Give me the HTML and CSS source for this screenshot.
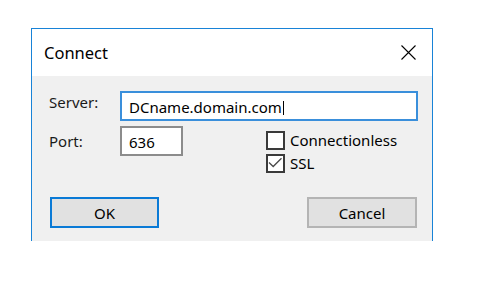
FILE: index.html
```html
<!DOCTYPE html>
<html lang="en">
<head>
    <meta charset="UTF-8">
    <title>Connect</title>
    <link rel="stylesheet" href="styles.css">
</head>
<body>
    <div class="dialog">
        <div class="titlebar">
            <span class="title">Connect</span>
            <svg class="close" width="15" height="15" viewBox="0 0 15 15">
                <path d="M0.5 0.5 L14.5 14.5 M14.5 0.5 L0.5 14.5" stroke="#000" stroke-width="1.1" fill="none"/>
            </svg>
        </div>
        <div class="content">
            <div class="row">
                <label class="label server-label">Server:</label>
                <div class="textbox server focused">DCname.domain.com<span class="caret"></span></div>
            </div>
            <div class="row port-row">
                <label class="label port-label">Port:</label>
                <div class="textbox port">636</div>
                <div class="checks">
                    <div class="check">
                        <span class="box"></span>
                        <span>Connectionless</span>
                    </div>
                    <div class="check">
                        <span class="box">
                            <svg width="15" height="15" viewBox="0 0 15 15">
                                <path d="M1 6.5 L5.2 10.5 L13.5 2.2" stroke="#4a4a4a" stroke-width="1.3" fill="none"/>
                            </svg>
                        </span>
                        <span>SSL</span>
                    </div>
                </div>
            </div>
            <div class="buttons">
                <button class="btn default">OK</button>
                <button class="btn">Cancel</button>
            </div>
        </div>
    </div>
</body>
</html>
```

FILE: styles.css
```css
:root {
    --accent: #1883d7;
    --face: #f0f0f0;
    --button: #e1e1e1;
}
body {
    margin: 0;
    background: #ffffff;
    font-family: "Noto Sans", "Liberation Sans", sans-serif;
    font-size: 15px;
    color: #000000;
}
.dialog {
    width: 402px;
    margin: 28px 0 0 31px;
    box-sizing: border-box;
    border: 1px solid var(--accent);
    border-bottom: none;
}
.titlebar {
    height: 47px;
    display: flex;
    align-items: center;
    justify-content: space-between;
    padding: 0 16px 0 12px;
    background: #ffffff;
}
.title {
    font-size: 16.5px;
    line-height: 22px;
}
.close {
    display: block;
}
.content {
    height: 165px;
    box-sizing: border-box;
    padding-top: 15px;
    background: var(--face);
}
.row {
    display: flex;
    align-items: flex-start;
    padding-left: 17px;
}
.port-row {
    margin-top: 5px;
}
.label {
    width: 71px;
    line-height: 20px;
    color: #1a1a1a;
}
.server-label {
    padding-top: 1px;
}
.port-label {
    padding-top: 5px;
}
.textbox {
    height: 30px;
    box-sizing: border-box;
    padding: 4px 6px 4px 7px;
    line-height: 20px;
    background: #ffffff;
    border: 2px solid #8c8c8c;
    white-space: nowrap;
}
.textbox.focused {
    border-color: #3a8fdb;
}
.server {
    width: 298px;
}
.port {
    width: 63px;
}
.caret {
    display: inline-block;
    width: 1px;
    height: 14px;
    margin-left: 1px;
    vertical-align: -2px;
    background: #000000;
}
.checks {
    margin-left: 83px;
    padding-top: 5px;
    display: flex;
    flex-direction: column;
    gap: 4px;
}
.check {
    display: flex;
    align-items: flex-start;
    gap: 5px;
    line-height: 19px;
}
.box {
    width: 19px;
    height: 19px;
    box-sizing: border-box;
    border: 2px solid #3a3a3a;
    background: #ffffff;
    display: flex;
    align-items: center;
    justify-content: center;
}
.box svg {
    display: block;
}
.buttons {
    display: flex;
    justify-content: space-between;
    margin-top: 24px;
    padding: 0 15px 0 18px;
}
.btn {
    width: 110px;
    height: 31px;
    box-sizing: border-box;
    background: var(--button);
    border: 2px solid #b4b4b4;
    font-family: inherit;
    font-size: 15px;
    color: #000000;
    padding: 0;
}
.btn.default {
    width: 109px;
    border-color: #0a7ad6;
}
```
